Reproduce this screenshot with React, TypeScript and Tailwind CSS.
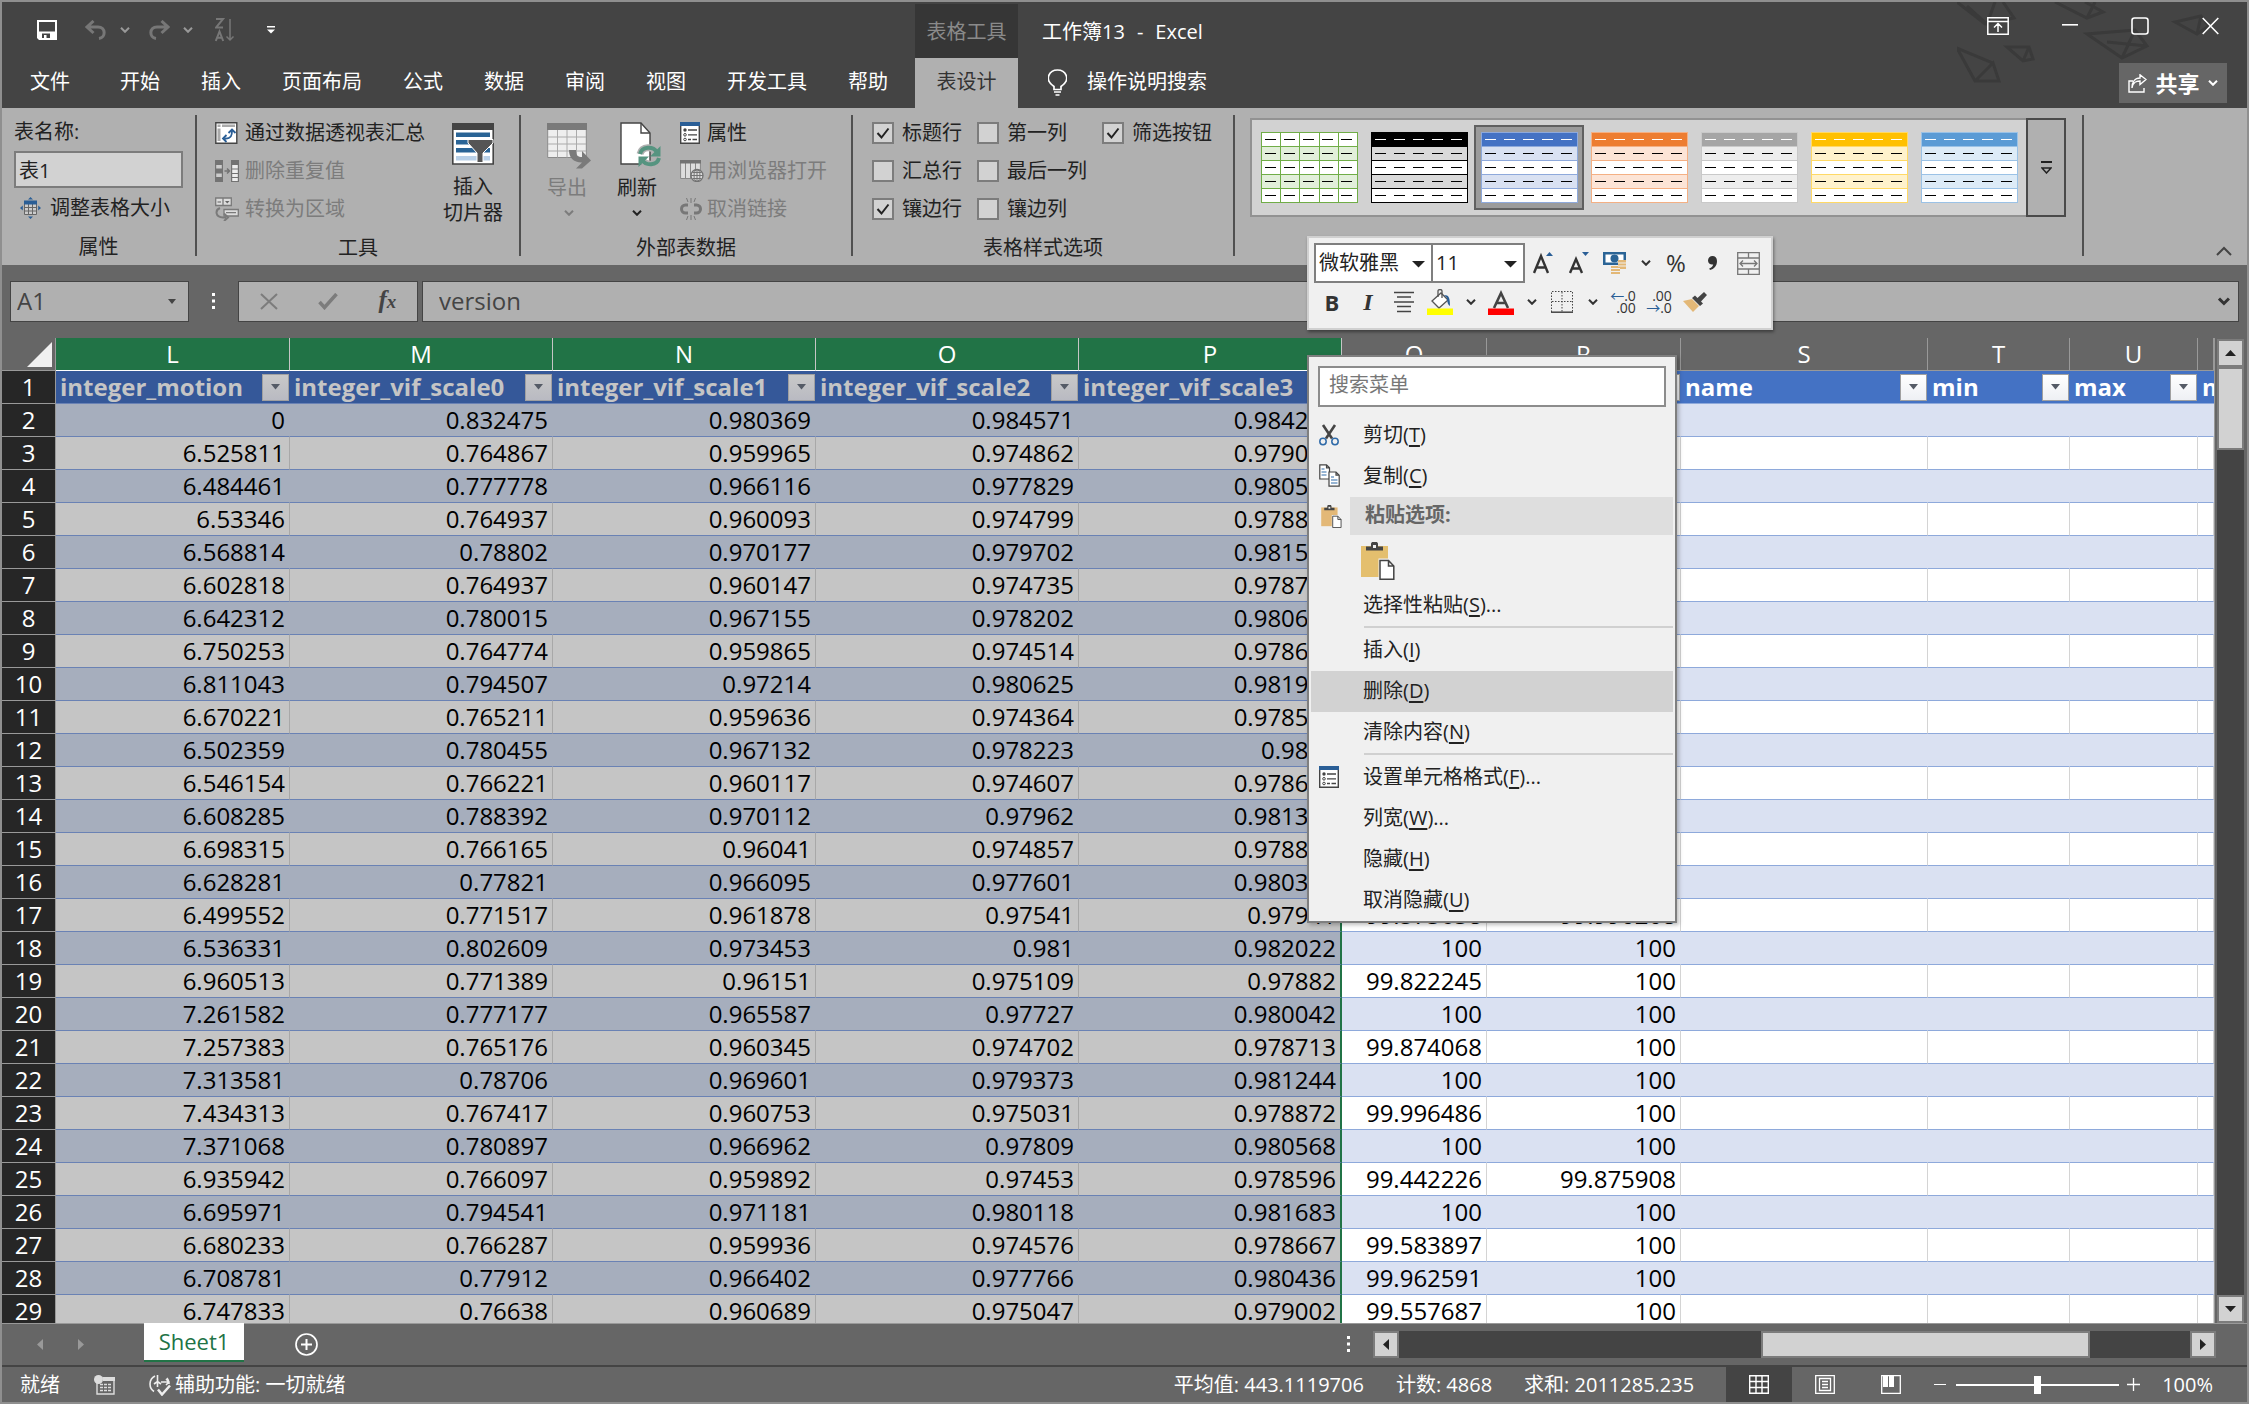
import type { ReactNode } from "react";
import { clsx } from "clsx";

/* ---------- データ ---------- */

// L, M, N, O, P, Q, R
const rows: string[][] = [
    ["0", "0.832475", "0.980369", "0.984571", "0.984217", "100", "100"],
    ["6.525811", "0.764867", "0.959965", "0.974862", "0.979033", "99.5", "100"],
    ["6.484461", "0.777778", "0.966116", "0.977829", "0.980514", "100", "100"],
    ["6.53346", "0.764937", "0.960093", "0.974799", "0.978821", "99.5", "100"],
    ["6.568814", "0.78802", "0.970177", "0.979702", "0.981512", "100", "100"],
    ["6.602818", "0.764937", "0.960147", "0.974735", "0.978714", "99.5", "100"],
    ["6.642312", "0.780015", "0.967155", "0.978202", "0.980612", "100", "100"],
    ["6.750253", "0.764774", "0.959865", "0.974514", "0.978615", "99.5", "100"],
    ["6.811043", "0.794507", "0.97214", "0.980625", "0.981942", "100", "100"],
    ["6.670221", "0.765211", "0.959636", "0.974364", "0.978523", "99.5", "100"],
    ["6.502359", "0.780455", "0.967132", "0.978223", "0.9805", "100", "100"],
    ["6.546154", "0.766221", "0.960117", "0.974607", "0.978635", "99.5", "100"],
    ["6.608285", "0.788392", "0.970112", "0.97962", "0.981327", "100", "100"],
    ["6.698315", "0.766165", "0.96041", "0.974857", "0.978841", "99.5", "100"],
    ["6.628281", "0.77821", "0.966095", "0.977601", "0.980314", "100", "100"],
    ["6.499552", "0.771517", "0.961878", "0.97541", "0.97941", "99.573638", "99.990208"],
    ["6.536331", "0.802609", "0.973453", "0.981", "0.982022", "100", "100"],
    ["6.960513", "0.771389", "0.96151", "0.975109", "0.97882", "99.822245", "100"],
    ["7.261582", "0.777177", "0.965587", "0.97727", "0.980042", "100", "100"],
    ["7.257383", "0.765176", "0.960345", "0.974702", "0.978713", "99.874068", "100"],
    ["7.313581", "0.78706", "0.969601", "0.979373", "0.981244", "100", "100"],
    ["7.434313", "0.767417", "0.960753", "0.975031", "0.978872", "99.996486", "100"],
    ["7.371068", "0.780897", "0.966962", "0.97809", "0.980568", "100", "100"],
    ["6.935942", "0.766097", "0.959892", "0.97453", "0.978596", "99.442226", "99.875908"],
    ["6.695971", "0.794541", "0.971181", "0.980118", "0.981683", "100", "100"],
    ["6.680233", "0.766287", "0.959936", "0.974576", "0.978667", "99.583897", "100"],
    ["6.708781", "0.77912", "0.966402", "0.977766", "0.980436", "99.962591", "100"],
    ["6.747833", "0.76638", "0.960689", "0.975047", "0.979002", "99.557687", "100"],
];

const columns = [
    { letter: "L", title: "integer_motion", width: "w-[234px]", selected: true },
    { letter: "M", title: "integer_vif_scale0", width: "w-[263px]", selected: true },
    { letter: "N", title: "integer_vif_scale1", width: "w-[263px]", selected: true },
    { letter: "O", title: "integer_vif_scale2", width: "w-[263px]", selected: true },
    { letter: "P", title: "integer_vif_scale3", width: "w-[263px]", selected: true },
    { letter: "Q", title: "", width: "w-[145px]", selected: false },
    { letter: "R", title: "", width: "w-[194px]", selected: false },
    { letter: "S", title: "name", width: "w-[247px]", selected: false },
    { letter: "T", title: "min", width: "w-[142px]", selected: false },
    { letter: "U", title: "max", width: "w-[128px]", selected: false },
    { letter: "", title: "mean", width: "", selected: false },
];

const tabs = ["开始", "插入", "页面布局", "公式", "数据", "审阅", "视图", "开发工具", "帮助"];

const styles = [
    { name: "浅绿", head: "#ffffff", band: "#e2efda", line: "#70ad47", dash: "#000000", grid: true },
    { name: "黑色", head: "#000000", band: "#d9d9d9", line: "#000000", dash: "#ffffff" },
    { name: "蓝色", head: "#4472c4", band: "#d9e1f2", line: "#8ea9db", dash: "#ffffff", active: true },
    { name: "橙色", head: "#ed7d31", band: "#fce4d6", line: "#f4b084", dash: "#ffffff" },
    { name: "灰色", head: "#a5a5a5", band: "#ededed", line: "#c9c9c9", dash: "#ffffff" },
    { name: "金色", head: "#ffc000", band: "#fff2cc", line: "#ffd966", dash: "#ffffff" },
    { name: "浅蓝", head: "#5b9bd5", band: "#ddebf7", line: "#9bc2e6", dash: "#ffffff" },
];

/* ---------- アイコン ---------- */

function Chevron({ className = "" }: { className?: string }) {
    return (
        <svg width="10" height="6" viewBox="0 0 10 6" fill="none" stroke="currentColor" strokeWidth="2" className={className}>
            <path d="M1 .8l4 4 4-4" />
        </svg>
    );
}

function SaveIcon() {
    return (
        <svg width="20" height="20" viewBox="0 0 20 20">
            <path fill="#fff" fillRule="evenodd" d="M0 0h20v20H2l-2-2zM2 2v9.500h16V2zM5 13.500V18h2v-3h2.500v3H13v-4.500z" />
        </svg>
    );
}

function UndoIcon({ flip = false }: { flip?: boolean }) {
    return (
        <svg width="22" height="20" viewBox="0 0 22 20" fill="none" stroke="#777" strokeWidth="3" className={flip ? "-scale-x-100" : ""}>
            <path d="M8.500 1L2 7l6.500 6M2.500 7H13c8 0 8 10.500 1 11.500" />
        </svg>
    );
}

function SortIcon() {
    return (
        <svg width="20" height="24" viewBox="0 0 20 24" fill="none" stroke="#777" strokeWidth="2">
            <path d="M1 1h7L1 9.500h7M.8 23L4.500 13.500 8.200 23M2.200 19.800h4.600" />
            <path d="M15 1v21M11.500 18.500L15 22l3.500-3.500" strokeWidth="1.500" />
        </svg>
    );
}

function PropertiesIcon() {
    return (
        <svg width="20" height="22" viewBox="0 0 20 22" fill="none">
            <path d="M.7 3h18.600v18.300H.7z" fill="#fff" stroke="#444" strokeWidth="1.400" />
            <path d="M0 0h20v4H0z" fill="#2a5e96" />
            <circle cx="5" cy="8" r="1.700" fill="#444" />
            <circle cx="5" cy="12.800" r="1.300" stroke="#444" />
            <circle cx="5" cy="17.500" r="1.300" stroke="#444" />
            <path d="M8 8h9M8 12.800h9M8 17.500h3M12.500 17.500H17" stroke="#444" strokeWidth="1.300" />
        </svg>
    );
}

function PivotIcon() {
    return (
        <svg width="23" height="22" viewBox="0 0 23 22" fill="none">
            <path d="M.8.8h21v20.400H.8z" fill="#fff" stroke="#444" strokeWidth="1.400" />
            <path d="M2.500 2.500h3v2.500h-3zM7 2.500h13v2.500H7zM2.500 6.500h3V19h-3z" fill="#aaa" />
            <path d="M9.500 16.500c7 .5 7.500-3.500 7.500-8M13.500 11L17 7.500l3.500 3.500M11.500 13L8 16.500l3.500 3.500" stroke="#2a5e96" strokeWidth="1.800" />
        </svg>
    );
}

function DedupeIcon() {
    return (
        <svg width="24" height="22" viewBox="0 0 24 22" fill="none">
            <path d="M0 0h8v22H0z" fill="#737373" />
            <path d="M1.200 5h5.600v3.500H1.200zM1.200 13.500h5.600V17H1.200z" fill="#ccc" />
            <path d="M9.500 11H14M12 8.500l2.500 2.500L12 13.500" stroke="#737373" strokeWidth="1.500" />
            <path d="M16 0h8v22h-8z" fill="#737373" />
            <path d="M17.200 5h5.600v3.500h-5.600zM17.200 9.500h5.600V13h-5.600zM17.200 14h5.600v3h-5.600zM17.200 18h5.600v3h-5.600z" fill="#eee" />
        </svg>
    );
}

function ConvertIcon() {
    return (
        <svg width="24" height="24" viewBox="0 0 24 24" fill="none" stroke="#7a7a7a" strokeWidth="1.300">
            <path d="M.7 1h15.600v7.500H.7zM8 1v7.500" fill="#ddd" />
            <path d="M2.500 5H6" />
            <path d="M10 4h4.500l-2.200 2.500z" fill="#666" stroke="none" />
            <path d="M9 12.500h14.300V19H9zM11 15.700h10" fill="#ddd" />
            <path d="M5 11c-5 2-5 9 3 9.500h3M9 16.500l4 4-4 3.500" strokeWidth="2" />
        </svg>
    );
}

function ResizeIcon() {
    return (
        <svg width="21" height="22" viewBox="0 0 21 22" fill="none">
            <path d="M4.500 4.500h12v13h-12zM4.500 10.500h12M4.500 14h12M8.500 7v10.500M12.500 7v10.500" fill="#ccc" stroke="#666" />
            <path d="M4 3.500h13v4H4zM10.500 0l2.500 2.500H8zM10.500 22l2.500-2.500H8zM0 11l2.800-2.500v5zM21 11l-2.800-2.500v5z" fill="#2a5e96" />
        </svg>
    );
}

function SlicerIcon() {
    return (
        <svg width="42" height="42" viewBox="0 0 42 42">
            <path d="M.8 1h40.400v40H.8z" fill="#fff" stroke="#444" strokeWidth="1.600" />
            <path d="M0 0h42v7H0z" fill="#444" />
            <path d="M4 9.500h34V14H4zM4 17h34v4.500H4zM4 25h34v4.500H4z" fill="#2a6496" />
            <path d="M4 33h34v4.500H4z" fill="#b8d0e8" />
            <path d="M16 16.500h25v3.500l-10 10v9.500h-6V30L16 20z" fill="#555" stroke="#fff" strokeWidth="1" />
        </svg>
    );
}

function ExportIcon() {
    return (
        <svg width="44" height="46" viewBox="0 0 44 46" fill="none">
            <path d="M.7 1h38.600v33.500H.7z" fill="#eee" stroke="#8a8a8a" />
            <path d="M0 0h40v7H0z" fill="#7a7a7a" />
            <path d="M1 14h38M1 21h38M1 28h38M10.500 7v27.500M20 7v27.500M29.500 7v27.500" stroke="#aaa" />
            <path d="M22 27h7c0 6 2 7 6 7v-6l9 9.500-9 8h-6l6-6c-9 0-13-5-13-12.500z" fill="#7a7a7a" />
        </svg>
    );
}

function RefreshIcon() {
    return (
        <svg width="42" height="46" viewBox="0 0 42 46" fill="none">
            <path d="M1 1h20l9 10v31H1z" fill="#fff" stroke="#444" strokeWidth="1.400" />
            <path d="M21 1v10h9" stroke="#444" strokeWidth="1.400" />
            <path d="M20 32c2-8 13-8 17-2M39 36c-2 8-13 8-17 2" stroke="#b0b0b0" strokeWidth="7" />
            <path d="M20 32c2-8 13-8 17-2M39 36c-2 8-13 8-17 2" stroke="#569480" strokeWidth="4" />
            <path d="M40.500 24v10.500H30zM18.500 45V34.500H29z" fill="#569480" />
        </svg>
    );
}

function BrowserIcon() {
    return (
        <svg width="24" height="22" viewBox="0 0 24 22" fill="none">
            <path d="M.6 1h19.800v17.500H.6zM5.500 3v15.500M10.500 3v15.500M15.500 3v15.500" fill="#ddd" stroke="#888" />
            <path d="M0 0h21v3.500H0z" fill="#737373" />
            <circle cx="17" cy="15.500" r="6" fill="#ddd" stroke="#737373" strokeWidth="1.300" />
            <path d="M11 15.500h12M17 9.500v12M12.500 12.500h9M12.500 18.500h9" stroke="#737373" />
            <ellipse cx="17" cy="15.500" rx="3" ry="6" stroke="#737373" />
        </svg>
    );
}

function UnlinkIcon() {
    return (
        <svg width="22" height="22" viewBox="0 0 22 22" fill="none" stroke="#777">
            <path d="M8 7H5.500a4 4 0 000 8H8M14 7h2.500a4 4 0 010 8H14" strokeWidth="3" />
            <path d="M11 0v5M6.500 0L8 4M15.500 0L14 4M11 22v-5M6.500 22L8 18M15.500 22L14 18" />
        </svg>
    );
}

function CutIcon() {
    return (
        <svg width="20" height="22" viewBox="0 0 20 22" fill="none">
            <path d="M4 1l9 13.500M16 1L7 14.500" stroke="#444" strokeWidth="2.600" />
            <circle cx="4" cy="17.500" r="3.200" stroke="#2f6aa8" strokeWidth="1.500" />
            <circle cx="16" cy="17.500" r="3.200" stroke="#2f6aa8" strokeWidth="1.500" />
        </svg>
    );
}

function CopyIcon() {
    return (
        <svg width="21" height="23" viewBox="0 0 21 23" fill="#fff" stroke="#444" strokeWidth="1.200">
            <path d="M.8.8h6.700l3 3V15H.8zM7.500.8v3h3" />
            <path d="M2.500 5h3M2.500 8h5M2.500 11h5" stroke="#2f6aa8" />
            <path d="M10 8h7l3.200 3.200v11H10zM17 8v3.200h3.200" />
            <path d="M12 13h3M12 16h6.500M12 19h6.500" stroke="#2f6aa8" />
        </svg>
    );
}

function PasteIcon({ large = false }: { large?: boolean }) {
    return (
        <svg width={large ? 34 : 21} height={large ? 38 : 23} viewBox="0 0 34 38">
            <path d="M0 4h27v31H0z" fill={large ? "#e4bf6e" : "#e3b877"} />
            <path d="M5 8.500V4.500h5V1.500L11 0h5l1 1.500v3h5v4z" fill="#444" />
            <path d="M12 3h3v3h-3z" fill="#f0f0f0" />
            <path d="M17.500 16.500h10.500l5.300 5.500v15.300H17.500z" fill="#f0f0f0" />
            <path d="M19 18.500h8.500l5.300 5.500v13.300H19zM27.500 18.500V24h5.300" fill="#fff" stroke="#444" strokeWidth="1.500" />
        </svg>
    );
}

function StyleThumb({ item }: { item: (typeof styles)[number] }) {
    return (
        <svg width="97" height="71" viewBox="0 0 97 71" shapeRendering="crispEdges">
            <rect width="97" height="71" fill="#fff" />
            <rect width="97" height="14" fill={item.head} />
            <rect y="14" width="97" height="14" fill={item.band} />
            <rect y="42" width="97" height="14" fill={item.band} />
            <path d="M0 14.500h97M0 28.500h97M0 42.500h97M0 56.500h97M.5.5h96v70H.5z" stroke={item.line} fill="none" strokeWidth="1" />
            {item.grid && <path d="M19.500 0v71M38.500 0v71M58.500 0v71M77.500 0v71" stroke={item.line} />}
            <path d="M4 7.500h91" stroke={item.dash} strokeWidth="1.500" strokeDasharray="11 8" />
            <path d="M4 21.500h91M4 35.500h91M4 49.500h91M4 63.500h91" stroke="#000" strokeWidth="1.500" strokeDasharray="11 8" />
        </svg>
    );
}

/* ---------- 標題列 ---------- */

function TitleBar() {
    return (
        <header className="relative bg-[#444] text-white">
            {/* 背景の幾何学模様 */}
            <svg width="290" height="84" viewBox="0 0 290 84" fill="none" stroke="#3a3a3a" strokeWidth="3" className="absolute right-0 top-0">
                <path d="M0 0l28 22 29-6L46 0M38 0l-8 22L10 4M98 0l32 16 16-6L128 0M130 16l8-16M0 46l18 33h24l-6-18zM18 79l18-18 6 18M50 45l16 14 10-2-4-12zM66 59l6-14M130 32l35 24 25-12-12-16zM165 56l13-28M150 40l40 4M218 20l22 12 12-8-8-10zM240 32l4-18" />
            </svg>
            <div className="relative flex h-14 items-stretch">
                <div className="flex w-[913px] items-center pl-[35px]">
                    <button aria-label="保存"><SaveIcon /></button>
                    <button aria-label="撤消" className="ml-7 flex items-center gap-[13px] text-[#999]"><UndoIcon /><Chevron /></button>
                    <button aria-label="恢复" className="ml-[18px] flex items-center gap-[13px] text-[#999]"><UndoIcon flip /><Chevron /></button>
                    <button aria-label="降序" className="ml-[22px]"><SortIcon /></button>
                    <button aria-label="自定义快速访问工具栏" className="ml-8">
                        <svg width="8" height="8" viewBox="0 0 8 8" fill="#fff"><path d="M0 0h8v1.500H0zM0 3.500h8l-4 4z" /></svg>
                    </button>
                </div>
                <div className="mt-0.5 w-[103px] bg-[#363636] pt-[14px] text-center text-[20px] leading-[28px] text-[#8a8a8a]">表格工具</div>
                <h1 className="flex gap-3 pl-6 pt-4 text-[20px] leading-[28px]">
                    <span>工作簿13</span>
                    <span>-</span>
                    <span>Excel</span>
                </h1>
                <div className="ml-auto flex items-start gap-[53px] pr-7 pt-[15px]">
                    <button aria-label="功能区显示选项">
                        <svg width="22" height="18" viewBox="0 0 22 18" fill="none" stroke="#fff" strokeWidth="1.500"><path d="M.8.8h20.400v16.400H.8zM1 4.500h20M11 15V7M7 10.500L11 6.500l4 4" /></svg>
                    </button>
                    <button aria-label="最小化">
                        <svg width="16" height="18" viewBox="0 0 16 18"><path d="M0 7h16v1.600H0z" fill="#fff" /></svg>
                    </button>
                    <button aria-label="最大化">
                        <svg width="18" height="18" viewBox="0 0 18 18" fill="none" stroke="#fff" strokeWidth="1.600"><rect x="1" y="1" width="16" height="16" rx="2.500" /></svg>
                    </button>
                    <button aria-label="关闭">
                        <svg width="17" height="18" viewBox="0 0 17 18" stroke="#fff" strokeWidth="1.600"><path d="M.7 1l15.600 16M16.300 1L.7 17" /></svg>
                    </button>
                </div>
            </div>
            <nav className="relative flex h-[50px] items-stretch text-[20px]">
                <div className="flex w-[913px] items-center gap-[41px] pl-7 pb-0.5">
                    <button className="mr-[9px]">文件</button>
                    {tabs.map((tab) => (
                        <button key={tab}>{tab}</button>
                    ))}
                </div>
                <button className="w-[103px] bg-[#b0b0b0] pb-0.5 text-[#333]">表设计</button>
                <button className="flex items-center gap-5 pb-0.5 pl-[30px]">
                    <svg width="19" height="27" viewBox="0 0 19 27" fill="none" stroke="#fff" strokeWidth="1.700"><path d="M6 20.500v-3C-5 10 2 1 9.500 1S24 10 13 17.500v3zM6 23h7M7.500 26h4" /></svg>
                    操作说明搜索
                </button>
                <button className="mb-[5px] ml-auto mr-[20px] mt-[5px] flex w-[108px] items-center justify-center gap-2 bg-[#666] font-bold text-[22px]">
                    <svg width="19" height="19" viewBox="0 0 19 19" fill="none" stroke="#fff" strokeWidth="1.400"><path d="M5 7H1v11h15v-4M4 14c1-6 4-7 8-7v3.500L18 5.500 12 .8V4C7 4 4 8 4 14z" /></svg>
                    共享
                    <Chevron />
                </button>
            </nav>
        </header>
    );
}

/* ---------- リボン ---------- */

function Group({ label, className, children }: { label?: string; className: string; children: ReactNode }) {
    return (
        <section className={clsx("flex flex-col border-r-2 border-[#505050]", className)}>
            <div className="h-[114px]">{children}</div>
            <div className="mt-[9px] text-center leading-[22px]">{label}</div>
        </section>
    );
}

function RibbonButton({ icon, disabled, children }: { icon: ReactNode; disabled?: boolean; children: ReactNode }) {
    return (
        <button disabled={disabled} className="flex h-[38px] items-center text-[#222] disabled:text-[#7c7c7c]">
            <span className="flex w-[30px]">{icon}</span>
            {children}
        </button>
    );
}

function Check({ label, checked = false }: { label: string; checked?: boolean }) {
    return (
        <label className="flex h-[38px] items-center gap-2">
            <span className="relative flex">
                <input type="checkbox" defaultChecked={checked} className="peer size-[22px] appearance-none border-2 border-[#7c7c7c] bg-[#d2d2d2]" />
                <svg width="22" height="22" viewBox="0 0 22 22" fill="none" stroke="#222" strokeWidth="2" className="pointer-events-none absolute hidden peer-checked:block"><path d="M5.500 11l4 4.500 7-9" /></svg>
            </span>
            {label}
        </label>
    );
}

function Ribbon() {
    return (
        <div className="flex h-[157px] bg-[#b0b0b0] pb-[9px] pt-[7px] text-[20px] text-[#222]">
            <Group label="属性" className="w-[195px]">
                <div className="-mt-0.5 px-3">
                    <label htmlFor="table-name" className="flex h-[38px] items-center">表名称:</label>
                    <input id="table-name" defaultValue="表1" className="block h-[37px] w-[169px] border-2 border-[#7c7c7c] bg-[#d2d2d2] px-[3px]" />
                    <div className="pl-1.5 pt-px"><RibbonButton icon={<ResizeIcon />}>调整表格大小</RibbonButton></div>
                </div>
            </Group>
            <Group label="工具" className="w-[324px]">
                <div className="-mt-px flex pl-[18px]">
                    <div>
                        <RibbonButton icon={<PivotIcon />}>通过数据透视表汇总</RibbonButton>
                        <RibbonButton icon={<DedupeIcon />} disabled>删除重复值</RibbonButton>
                        <RibbonButton icon={<ConvertIcon />} disabled>转换为区域</RibbonButton>
                    </div>
                    <button className="ml-[18px] flex flex-col items-center pt-[9px] leading-[26px]">
                        <SlicerIcon />
                        <span className="mt-[9px]">插入<br />切片器</span>
                    </button>
                </div>
            </Group>
            <Group label="外部表数据" className="w-[332px]">
                <div className="-mt-px flex pl-[26px]">
                    <button disabled className="flex w-11 flex-col items-start pt-[9px] leading-[26px] text-[#7c7c7c]">
                        <ExportIcon />
                        <span className="mt-[6px]">导出</span>
                        <Chevron className="ml-[17px] mt-[9px]" />
                    </button>
                    <button className="ml-[29px] flex w-[42px] flex-col items-start pt-2 leading-[26px]">
                        <RefreshIcon />
                        <span className="-ml-[3px] mt-[7px]">刷新</span>
                        <Chevron className="ml-3 mt-[9px]" />
                    </button>
                    <div className="ml-[18px] [&_span]:w-[27px]">
                        <RibbonButton icon={<PropertiesIcon />}>属性</RibbonButton>
                        <RibbonButton icon={<BrowserIcon />} disabled>用浏览器打开</RibbonButton>
                        <RibbonButton icon={<UnlinkIcon />} disabled>取消链接</RibbonButton>
                    </div>
                </div>
            </Group>
            <Group label="表格样式选项" className="w-[382px]">
                <div className="-mt-px grid grid-cols-[105px_125px_1fr] pl-[19px]">
                    <Check label="标题行" checked />
                    <Check label="第一列" />
                    <Check label="筛选按钮" checked />
                    <Check label="汇总行" />
                    <Check label="最后一列" />
                    <span />
                    <Check label="镶边行" checked />
                    <Check label="镶边列" />
                </div>
            </Group>
            <Group className="w-[849px] pl-[15px]">
                <div className="mt-[3px] flex h-[99px] w-[816px] border-2 border-[#929292] bg-[#d2d2d2]">
                    <div className="flex flex-1 items-center pl-0.5">
                        {styles.map((item) => (
                            <button
                                key={item.name}
                                aria-label={item.name}
                                className={clsx("flex h-[85px] w-[110px] items-center justify-center", item.active && "border-2 border-[#606060] bg-[#9b9b9b]")}
                            >
                                <StyleThumb item={item} />
                            </button>
                        ))}
                    </div>
                    <button aria-label="其他样式" className="-m-0.5 flex w-10 flex-col items-center justify-center gap-1 border-2 border-[#4a4a4a] bg-[#b0b0b0]">
                        <span className="h-0.5 w-[11px] bg-[#222]" />
                        <svg width="11" height="7" viewBox="0 0 11 7" fill="none" stroke="#222" strokeWidth="1.500"><path d="M1 1h9L5.500 6z" /></svg>
                    </button>
                </div>
            </Group>
            <button aria-label="折叠功能区" className="ml-auto mr-[15px] self-end">
                <svg width="16" height="10" viewBox="0 0 16 10" fill="none" stroke="#444" strokeWidth="2"><path d="M1 9l7-7 7 7" /></svg>
            </button>
        </div>
    );
}

/* ---------- 数式バー ---------- */

function Dots() {
    return (
        <svg width="4" height="18" viewBox="0 0 4 18" fill="#fff"><path d="M0 0h3v3H0zM0 6.500h3v3H0zM0 13h3v3H0z" /></svg>
    );
}

function FormulaBar() {
    return (
        <div className="flex h-[73px] items-start bg-[#666] px-2 pt-4 text-[24px] text-[#444]">
            <div className="flex h-[41px] w-[179px] items-center border border-[#444] bg-[#b0b0b0] pr-3">
                <input aria-label="名称框" defaultValue="A1" className="w-full min-w-0 px-[6px] pb-0.5" />
                <svg width="8" height="5" viewBox="0 0 8 5" fill="#444" className="shrink-0"><path d="M0 0h8L4 5z" /></svg>
            </div>
            <div className="flex h-[41px] w-[49px] items-center justify-center"><Dots /></div>
            <div className="grid h-[41px] w-[180px] grid-cols-3 place-items-center border border-[#444] bg-[#b0b0b0]">
                <button aria-label="取消">
                    <svg width="18" height="17" viewBox="0 0 18 17" stroke="#7c7c7c" strokeWidth="2"><path d="M1 1l16 15M17 1L1 16" /></svg>
                </button>
                <button aria-label="输入">
                    <svg width="20" height="17" viewBox="0 0 20 17" fill="none" stroke="#7c7c7c" strokeWidth="3.500"><path d="M1.500 9l5 5.500L18.500 1" /></svg>
                </button>
                <button aria-label="插入函数" className="pb-1 font-['Liberation_Serif',serif] text-[25px] font-bold italic leading-none">f<span className="text-[19px]">x</span></button>
            </div>
            <div className="ml-1 flex h-[41px] flex-1 items-center border border-[#444] bg-[#b0b0b0] pr-2">
                <input aria-label="编辑栏" defaultValue="version" className="w-full px-4 pb-0.5" />
                <svg width="12" height="9" viewBox="0 0 12 9" fill="none" stroke="#333" strokeWidth="3"><path d="M1 1.500l5 5 5-5" /></svg>
            </div>
        </div>
    );
}

/* ---------- シート ---------- */

function FilterButton({ selected }: { selected: boolean }) {
    return (
        <button
            aria-label="筛选"
            className={clsx(
                "mr-px flex size-[27px] shrink-0 items-center justify-center border border-[#a0a0a0]",
                selected ? "bg-linear-to-b from-[#c8c8c8] to-[#b9bac2]" : "bg-linear-to-b from-white to-[#eef0f4]",
            )}
        >
            <svg width="9" height="6" viewBox="0 0 9 6" fill="#555b66"><path d="M0 0h9L4.500 5.500z" /></svg>
        </button>
    );
}

function Sheet() {
    return (
        <div className="flex min-h-0 flex-1 bg-[#666]">
            <div className="min-w-0 flex-1 overflow-hidden border-r border-[#999]">
                <table className="w-full table-fixed border-separate border-spacing-0 text-[24px] leading-[30px]">
                    <colgroup>
                        <col className="w-[54px]" />
                        {columns.map((column, i) => (
                            <col key={i} className={column.width} />
                        ))}
                    </colgroup>
                    <thead>
                        <tr className="h-[33px] text-white">
                            <th className="border-b border-r border-[#999] bg-[#666] p-0">
                                <svg width="25" height="25" viewBox="0 0 25 25" fill="#f0f0f0" className="ml-auto mr-[3px]"><path d="M25 0v25H0z" /></svg>
                            </th>
                            {columns.map((column, i) => (
                                <th
                                    key={i}
                                    className={clsx(
                                        "border-b border-r p-0 font-normal",
                                        column.selected ? "border-r-[#c5c5c5] border-b-white bg-[#217346]" : "border-[#999] bg-[#666]",
                                    )}
                                >
                                    {column.letter}
                                </th>
                            ))}
                        </tr>
                    </thead>
                    <tbody>
                        <tr className="h-[33px]">
                            <th className="border-b border-r border-[#999] bg-[#262626] p-0 font-normal text-white">1</th>
                            {columns.map((column, i) => (
                                <td
                                    key={i}
                                    className={clsx(
                                        "border-b p-0 font-bold",
                                        column.selected ? "border-[#6a82b4] bg-[#355899] text-[#c5c5c5]" : "border-[#8ea9db] bg-[#4472c4] text-white",
                                        i === 4 && "border-r-2 border-r-[#217346]",
                                    )}
                                >
                                    <div className="flex h-8 items-center justify-between overflow-hidden pl-1">
                                        {column.title}
                                        {column.letter && <span className="ml-auto"><FilterButton selected={column.selected} /></span>}
                                    </div>
                                </td>
                            ))}
                        </tr>
                        {rows.map((row, r) => {
                            const band = r % 2 === 0;
                            return (
                                <tr key={r} className="h-[33px]">
                                    <th className="border-b border-r border-[#999] bg-[#262626] p-0 font-normal text-white">{r + 2}</th>
                                    {columns.map((column, i) => (
                                        <td
                                            key={i}
                                            className={clsx(
                                                "border-b py-0 pl-0 pr-1 text-right text-black",
                                                column.selected ? "border-b-[#6a82b4]" : "border-b-[#8ea9db]",
                                                column.selected && (band ? "bg-[#a6aebd]" : "bg-[#c5c5c5]"),
                                                !column.selected && (band ? "bg-[#dae1f2]" : "bg-white"),
                                                i === 4 ? "border-r-2 border-r-[#217346]" : "border-r",
                                                i !== 4 && column.selected && (band ? "border-r-[#a6aebd]" : "border-r-[#a8a8a8]"),
                                                !column.selected && (band ? "border-r-[#dae1f2]" : "border-r-[#d4d4d4]"),
                                            )}
                                        >
                                            {row[i]}
                                        </td>
                                    ))}
                                </tr>
                            );
                        })}
                    </tbody>
                </table>
            </div>
            {/* 垂直スクロールバー */}
            <div className="ml-0.5 mr-[3px] mt-px flex w-[27px] flex-col bg-[#444]">
                <button aria-label="向上滚动" className="flex h-[28px] items-center justify-center border-2 border-[#7c7c7c] bg-[#d2d2d2]">
                    <svg width="11" height="6" viewBox="0 0 11 6" fill="#222"><path d="M0 6h11L5.500 0z" /></svg>
                </button>
                <div className="h-[83px] border-2 border-[#7c7c7c] bg-[#d2d2d2]" />
                <button aria-label="向下滚动" className="mt-auto flex h-[28px] items-center justify-center border-2 border-[#7c7c7c] bg-[#d2d2d2]">
                    <svg width="11" height="6" viewBox="0 0 11 6" fill="#222"><path d="M0 0h11L5.500 6z" /></svg>
                </button>
            </div>
        </div>
    );
}

function SheetTabs() {
    return (
        <div className="flex h-[42px] items-center border-t border-[#999] bg-[#666]">
            <button aria-label="上一个" className="ml-[35px]">
                <svg width="6" height="11" viewBox="0 0 6 11" fill="#999"><path d="M6 0v11L0 5.500z" /></svg>
            </button>
            <button aria-label="下一个" className="ml-[35px]">
                <svg width="6" height="11" viewBox="0 0 6 11" fill="#999"><path d="M0 0v11l6-5.500z" /></svg>
            </button>
            <button className="-mt-px ml-[60px] h-[39px] w-[100px] self-start border-b-2 border-[#217346] bg-white text-[22px] leading-[37px] text-[#217346]">Sheet1</button>
            <button aria-label="新工作表" className="ml-[51px]">
                <svg width="23" height="23" viewBox="0 0 23 23" fill="none" stroke="#fff" strokeWidth="1.700"><circle cx="11.500" cy="11.500" r="10.500" /><path d="M11.500 6v11M6 11.500h11" strokeWidth="2" /></svg>
            </button>
            <div className="ml-auto mr-[22px]"><Dots /></div>
            {/* 水平スクロールバー */}
            <div className="mr-[31px] flex h-[27px] w-[843px] bg-[#444]">
                <button aria-label="向左滚动" className="flex w-[26px] items-center justify-center border-2 border-[#7c7c7c] bg-[#d2d2d2]">
                    <svg width="6" height="11" viewBox="0 0 6 11" fill="#222"><path d="M6 0v11L0 5.500z" /></svg>
                </button>
                <div className="ml-[362px] w-[329px] border-2 border-[#7c7c7c] bg-[#d2d2d2]" />
                <button aria-label="向右滚动" className="ml-auto flex w-[26px] items-center justify-center border-2 border-[#7c7c7c] bg-[#d2d2d2]">
                    <svg width="6" height="11" viewBox="0 0 6 11" fill="#222"><path d="M0 0v11l6-5.500z" /></svg>
                </button>
            </div>
        </div>
    );
}

function StatusBar() {
    return (
        <footer className="flex h-[37px] items-center border-t-2 border-[#444] bg-[#666] text-[20px] text-white">
            <span className="ml-[18px]">就绪</span>
            <button aria-label="宏录制" className="ml-[34px]">
                <svg width="21" height="20" viewBox="0 0 21 20" fill="none"><path d="M3 3h17v16H3z" stroke="#ddd" strokeWidth="1.400" /><path d="M9 2h12v4H9z" fill="#ddd" /><path d="M6 9.500h12M6 12.500h12M6 15.500h12" stroke="#ddd" strokeWidth="1.500" strokeDasharray="3 1" /><circle cx="4.500" cy="4.500" r="4.500" fill="#ddd" /></svg>
            </button>
            <button className="ml-[34px] flex items-center gap-1">
                <svg width="22" height="22" viewBox="0 0 22 22" fill="none" stroke="#eee" strokeWidth="1.600"><path d="M6 2a9 9 0 00-1 15.500M8.500 1v7M5 10l3.500-2.500L12 10M8.500 8v5M18 4a9 9 0 012 6M12 8h8M17 5l3 3-3 3" /><path d="M9 15.500l4 5 8-9" strokeWidth="2.500" /></svg>
                辅助功能: 一切就绪
            </button>
            <div className="ml-auto flex gap-8 pr-8">
                <span>平均值: 443.1119706</span>
                <span>计数: 4868</span>
                <span>求和: 2011285.235</span>
            </div>
            <button aria-label="普通" className="flex h-full w-[66px] items-center justify-center bg-[#444]">
                <svg width="20" height="19" viewBox="0 0 20 19" fill="none" stroke="#fff" strokeWidth="1.400"><path d="M.7.7h18.600v17.600H.7zM7 1v17M13 1v17M1 6.500h18M1 12.500h18" /></svg>
            </button>
            <button aria-label="页面布局视图" className="flex w-[66px] justify-center">
                <svg width="20" height="19" viewBox="0 0 20 19" fill="none" stroke="#fff" strokeWidth="1.300"><path d="M.7.7h18.600v17.600H.7zM4.500 3.500h11v12h-11zM7 6.500h6M7 9.500h6M7 12.500h6" /></svg>
            </button>
            <button aria-label="分页预览" className="flex w-[66px] justify-center">
                <svg width="20" height="19" viewBox="0 0 20 19" fill="none"><path d="M.7.7h18.600v17.600H.7z" stroke="#fff" strokeWidth="1.300" /><path d="M2 0h5v12H2zM8 0h5v12H8z" fill="#fff" /></svg>
            </button>
            <button aria-label="缩小" className="ml-2.5 w-[14px]"><span className="block h-px w-3 bg-white" /></button>
            <input
                type="range"
                aria-label="缩放"
                defaultValue={50}
                className="mx-2 h-5 w-[163px] appearance-none bg-transparent [&::-webkit-slider-runnable-track]:h-0.5 [&::-webkit-slider-runnable-track]:bg-white [&::-webkit-slider-thumb]:-mt-2 [&::-webkit-slider-thumb]:h-[18px] [&::-webkit-slider-thumb]:w-[7px] [&::-webkit-slider-thumb]:appearance-none [&::-webkit-slider-thumb]:bg-white"
            />
            <button aria-label="放大">
                <svg width="13" height="13" viewBox="0 0 13 13" stroke="#fff" strokeWidth="1.300"><path d="M0 6.500h13M6.500 0v13" /></svg>
            </button>
            <span className="ml-[22px] mr-[34px]">100%</span>
        </footer>
    );
}

/* ---------- ミニツールバー ---------- */

function Dropdown({ label, value, className }: { label: string; value: string; className: string }) {
    return (
        <div className={clsx("relative h-10", className)}>
            <select aria-label={label} className="h-full w-full appearance-none border-2 border-[#7f7f7f] bg-white pl-[3px] text-[20px] text-[#222]">
                <option>{value}</option>
            </select>
            <svg width="13" height="7" viewBox="0 0 13 7" fill="#222" className="pointer-events-none absolute right-2 top-[18px]"><path d="M0 0h13L6.500 6.500z" /></svg>
        </div>
    );
}

function Tool({ label, narrow, children }: { label: string; narrow?: boolean; children: ReactNode }) {
    return (
        <button aria-label={label} className={clsx("flex h-full items-center justify-center", narrow ? "w-[25px]" : "w-9")}>
            {children}
        </button>
    );
}

function MiniToolbar() {
    return (
        <div className="absolute left-[1305px] top-[234px] h-[94px] w-[466px] border-2 border-[#d0d0d0] bg-[#f0f0f0] pl-[5px] pt-[5px] text-[#333] shadow-[1px_2px_3px_rgba(0,0,0,0.4)]">
            <div className="flex h-10 items-center">
                <Dropdown label="字体" value="微软雅黑" className="w-[119px]" />
                <Dropdown label="字号" value="11" className="-ml-0.5 w-[94px]" />
                <Tool label="增大字号">
                    <svg width="20" height="22" viewBox="0 0 20 22" fill="none" stroke="#333" strokeWidth="2.400"><path d="M1 21L8 4l7 17M3.500 15.500h9" /><path d="M13 4l3.500-4L20 4z" fill="#2a5e96" stroke="none" /></svg>
                </Tool>
                <Tool label="减小字号">
                    <svg width="20" height="22" viewBox="0 0 20 22" fill="none" stroke="#333" strokeWidth="2.400"><path d="M1 21L7 7l6 14M3 16.500h8" /><path d="M13 0l3.500 4L20 0z" fill="#2a5e96" stroke="none" /></svg>
                </Tool>
                <Tool label="会计数字格式">
                    <svg width="24" height="22" viewBox="0 0 24 22"><path d="M0 0h23v13H0z" fill="#2a6496" /><path d="M2.500 2.500h18v8h-18z" fill="#fff" /><circle cx="11.500" cy="6.500" r="4" fill="#2a6496" /><path d="M15 8h8v9h-8zM8 14h9v8H8z" fill="#e3b877" /><path d="M15 11h8M15 14h8M8 16.500h9M8 19.500h9" stroke="#f0f0f0" /></svg>
                </Tool>
                <Tool label="会计格式选项" narrow><Chevron /></Tool>
                <Tool label="百分比样式"><span className="text-[24px]">%</span></Tool>
                <Tool label="千位分隔样式">
                    <svg width="9" height="14" viewBox="0 0 9 14" fill="#333"><path d="M4.500 0C7 0 9 1.800 9 5c0 5-3 8-7 9l-.8-1.500c2.500-1 3.800-2.500 4-4C2.500 9 0 7.500 0 4.500 0 2 2 0 4.500 0z" /></svg>
                </Tool>
                <Tool label="合并后居中">
                    <svg width="23" height="23" viewBox="0 0 23 23" fill="none" stroke="#777" strokeWidth="1.300"><path d="M.7.7h21.600v21.600H.7zM1 6h21M1 17h21M11.500 1v5M11.500 17v5M3 11.500h17M6 8.500l-3 3 3 3M17 8.500l3 3-3 3" /></svg>
                </Tool>
            </div>
            <div className="flex h-[38px] items-center">
                <Tool label="加粗"><span className="text-[22px] font-bold">B</span></Tool>
                <Tool label="倾斜"><span className="font-['Liberation_Serif',serif] text-[24px] font-bold italic">I</span></Tool>
                <Tool label="居中">
                    <svg width="20" height="22" viewBox="0 0 20 22" stroke="#444" strokeWidth="1.300"><path d="M0 1.500h20M3 6h14M0 11h20M3 15.500h14M3 20.500h14" /></svg>
                </Tool>
                <Tool label="填充颜色">
                    <svg width="26" height="26" viewBox="0 0 26 26" fill="none"><path d="M5 12l9-8 7 7-9 8z" fill="#fff" stroke="#555" strokeWidth="1.300" /><path d="M11 8V2c0-2 4-2 4 0v7" stroke="#555" strokeWidth="1.300" /><path d="M17 6c5 0 6 3 6 11-2-1-3-4-3-8z" fill="#2a5e96" /><path d="M0 19.500h26V26H0z" fill="#ff0" /></svg>
                </Tool>
                <Tool label="填充颜色选项" narrow><Chevron /></Tool>
                <Tool label="字体颜色">
                    <svg width="26" height="26" viewBox="0 0 26 26" fill="none"><path d="M6 19L13 4l7 15M8.500 14h9" stroke="#444" strokeWidth="2.600" /><path d="M0 19.500h26V26H0z" fill="red" /></svg>
                </Tool>
                <Tool label="字体颜色选项" narrow><Chevron /></Tool>
                <Tool label="边框">
                    <svg width="22" height="22" viewBox="0 0 22 22" fill="none" stroke="#444"><path d="M.5 21V.5h21V21M11 1v20M1 10.500h20" strokeDasharray="1.500 1.500" /><path d="M0 21.200h22" strokeWidth="1.500" /></svg>
                </Tool>
                <Tool label="边框选项" narrow><Chevron /></Tool>
                <Tool label="增加小数位数">
                    <span className="text-right text-[14px] leading-[12px]"><span className="text-[#2a5e96]">←</span>.0<br />.00</span>
                </Tool>
                <Tool label="减少小数位数">
                    <span className="text-right text-[14px] leading-[12px]">.00<br /><span className="text-[#2a5e96]">→</span>.0</span>
                </Tool>
                <Tool label="格式刷">
                    <svg width="24" height="20" viewBox="0 0 24 20"><path d="M0 9l9-2 7 7-6 6z" fill="#e3b877" /><path d="M9 6l3-2.500 8 8-3 2.500zM14.500 6L21 0l3 3-6 6.500z" fill="#444" /></svg>
                </Tool>
            </div>
        </div>
    );
}

/* ---------- 右クリックメニュー ---------- */

function MenuItem({ icon, text, hotkey, tail, active }: { icon?: ReactNode; text: string; hotkey: string; tail?: string; active?: boolean }) {
    return (
        <li>
            <button className={clsx("flex h-[41px] w-full items-center pb-0.5", active && "bg-[#d2d2d2]")}>
                <span className="flex w-[52px] pl-2">{icon}</span>
                {text}(<u className="underline-offset-3">{hotkey}</u>){tail}
            </button>
        </li>
    );
}

function ContextMenu() {
    return (
        <div className="absolute left-[1305px] top-[353px] w-[370px] border-2 border-[#7f7f7f] bg-[#f0f0f0] px-0.5 text-[20px] text-[#222] shadow-[2px_2px_4px_rgba(0,0,0,0.25)]">
            <input
                type="search"
                aria-label="搜索菜单"
                placeholder="搜索菜单"
                className="mb-2 ml-[7px] mt-[9px] block h-[41px] w-[348px] border-2 border-[#8c8c8c] bg-white px-[9px] pb-1 placeholder:text-[#777]"
            />
            <ul>
                <MenuItem icon={<CutIcon />} text="剪切" hotkey="T" />
                <MenuItem icon={<CopyIcon />} text="复制" hotkey="C" />
                <li className="flex h-[38px] items-center">
                    <span className="w-[39px] pl-[10px]"><PasteIcon /></span>
                    <span className="flex h-full flex-1 items-center bg-[#dedede] pl-[15px] pb-0.5 font-bold text-[#666]">粘贴选项:</span>
                </li>
                <li className="h-[50px] pl-[50px] pt-[7px]">
                    <button aria-label="粘贴"><PasteIcon large /></button>
                </li>
                <MenuItem text="选择性粘贴" hotkey="S" tail="..." />
                <li className="mb-0.5 ml-[53px] h-0.5 bg-[#d0d0d0]" />
                <MenuItem text="插入" hotkey="I" />
                <MenuItem text="删除" hotkey="D" active />
                <MenuItem text="清除内容" hotkey="N" />
                <li className="mb-0.5 ml-[53px] h-0.5 bg-[#d0d0d0]" />
                <MenuItem icon={<PropertiesIcon />} text="设置单元格格式" hotkey="F" tail="..." />
                <MenuItem text="列宽" hotkey="W" tail="..." />
                <MenuItem text="隐藏" hotkey="H" />
                <MenuItem text="取消隐藏" hotkey="U" />
            </ul>
        </div>
    );
}

export default function App() {
    return (
        <div className="relative flex h-screen flex-col overflow-hidden border-2 border-[#8f8f8f] font-['Open_Sans','Noto_Sans_CJK_SC',sans-serif]">
            <TitleBar />
            <Ribbon />
            <FormulaBar />
            <Sheet />
            <SheetTabs />
            <StatusBar />
            <MiniToolbar />
            <ContextMenu />
        </div>
    );
}
